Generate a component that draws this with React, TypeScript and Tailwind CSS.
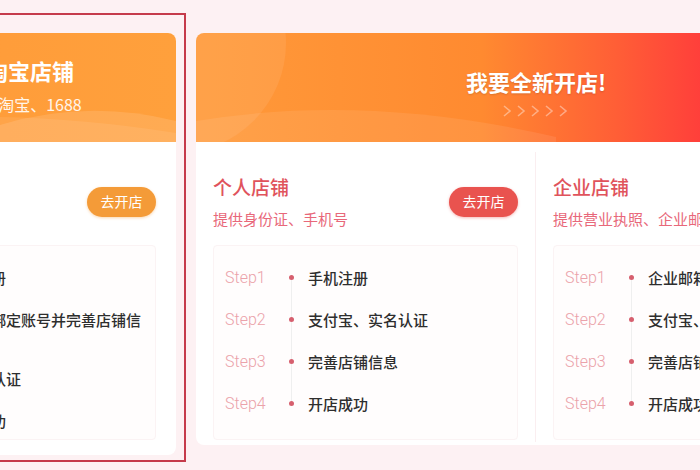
import React from 'react';

interface ShopColumnProps {
  title: string;
  sub: string;
  steps: string[];
  button: 'red' | 'orange';
}

const personal: ShopColumnProps = {
  title: '个人店铺',
  sub: '提供身份证、手机号',
  steps: ['手机注册', '支付宝、实名认证', '完善店铺信息', '开店成功'],
  button: 'red',
};

const company: ShopColumnProps = {
  title: '企业店铺',
  sub: '提供营业执照、企业邮箱',
  steps: ['企业邮箱注册', '支付宝、企业认证', '完善店铺信息', '开店成功'],
  button: 'red',
};

// left card is mostly cut off by the screenshot
const existing: ShopColumnProps = {
  title: '淘宝店铺',
  sub: '提供淘宝账号',
  steps: ['账号注册', '支付宝绑定账号并完善店铺信息', '支付宝认证', '开店成功'],
  button: 'orange',
};

function Chevrons() {
  return (
    <svg width="72" height="14" viewBox="0 0 72 14" fill="none">
      {[0, 1, 2, 3, 4].map((i) => (
        <path
          key={i}
          d={`M${4 + i * 14} 2 L${10 + i * 14} 7 L${4 + i * 14} 12`}
          stroke="white"
          strokeOpacity={0.4}
          strokeWidth="1.6"
        />
      ))}
    </svg>
  );
}

function ShopColumn({ title, sub, steps, button }: ShopColumnProps) {
  return (
    <div className="w-[305px] shrink-0 flex flex-col">
      <div className="flex items-center justify-between pt-[32px]">
        <div className="flex flex-col">
          <div className="text-[19px] leading-[25px] font-medium text-[#e0535c]">{title}</div>
          <div className="mt-[10px] text-[15px] leading-[20px] text-[#e8687a]">{sub}</div>
        </div>
        {button === 'red' ? (
          <button className="w-[69px] h-[30px] rounded-full bg-[#e9534f] text-white text-[14px] shadow-[0_1px_3px_rgba(233,83,79,0.4)]">
            去开店
          </button>
        ) : (
          <button className="w-[69px] h-[30px] rounded-full bg-[#f49b38] text-white text-[14px] shadow-[0_1px_3px_rgba(244,155,56,0.4)]">
            去开店
          </button>
        )}
      </div>

      <div className="mt-[16px] h-[195px] rounded border border-[#fbf3f4] bg-[#fffdfd] pl-[11px] pr-[7px] pt-[23px]">
        <div className="relative flex flex-col gap-[25px]">
          <div className="absolute left-[66px] top-[8px] bottom-[8px] w-px bg-[#efefef]" />
          {steps.map((s, i) => (
            <div key={i} className="flex items-start">
              <div className="w-[58px] shrink-0 font-['Roboto',sans-serif] font-light text-[16px] leading-[17px] text-[#eba2aa]">
                Step{i + 1}
              </div>
              <div className="w-[16px] h-[17px] shrink-0 flex items-center justify-center relative">
                <div className="w-[5px] h-[5px] rounded-full bg-[#d65f6e]" />
              </div>
              <div className="ml-[9px] w-[205px] text-[15px] leading-[17px] font-medium text-[#2e2e2e]">{s}</div>
            </div>
          ))}
        </div>
      </div>
    </div>
  );
}

export default function App() {
  return (
    <div className="w-[700px] h-[470px] bg-[#fdf1f3] overflow-hidden flex items-start font-['Noto_Sans_CJK_SC',sans-serif]">
      {/* selected card, partly off-screen */}
      <div className="ml-[-176px] mt-[13px] w-[362px] h-[449px] shrink-0 border-2 border-[#c53b4b] pt-[18px] pr-[8px] pl-[8px] pb-[5px] flex">
        <div className="flex-1 bg-white rounded-lg flex flex-col px-[17px] pb-[15px] relative">
          <div className="relative -mx-[17px] h-[109px] rounded-t-lg bg-[linear-gradient(90deg,#ff9a38,#ffa03c)] overflow-hidden pl-[6px] flex flex-col items-center pt-[23px] text-white">
            <svg className="absolute inset-0" width="342" height="109" viewBox="0 0 342 109" preserveAspectRatio="none">
              <path d="M120 109 Q 230 60 342 88 L342 109 Z" fill="white" fillOpacity="0.12" />
              <path d="M0 96 Q 150 70 342 100 L342 109 L0 109 Z" fill="white" fillOpacity="0.08" />
            </svg>
            <div className="relative text-[22px] leading-[29px] font-bold whitespace-nowrap">已有淘宝店铺</div>
            <div className="relative mt-[8px] text-[16px] leading-[22px] text-white/90 whitespace-nowrap">支持天猫淘宝、1688</div>
          </div>
          <ShopColumn {...existing} />
        </div>
      </div>

      {/* new shop card */}
      <div className="ml-[10px] mt-[33px] w-[680px] h-[412px] shrink-0 bg-white rounded-lg flex flex-col">
        <div className="relative h-[109px] rounded-t-lg overflow-hidden bg-[linear-gradient(90deg,#ff9a3a_0%,#ff8a30_42%,#ff5e36_62%,#ff3d3b_75%,#ff2f3a_100%)] flex flex-col items-center pt-[33px]">
          <svg className="absolute inset-0" width="680" height="109" viewBox="0 0 680 109">
            <circle cx="-20" cy="10" r="110" fill="white" fillOpacity="0.08" />
            <path d="M0 88 Q 170 60 360 104 L360 109 L0 109 Z" fill="white" fillOpacity="0.08" />
          </svg>
          <div className="relative text-white text-[22px] leading-[30px] font-bold [text-shadow:0_1px_2px_rgba(0,0,0,0.15)]">
            我要全新开店!
          </div>
          <div className="relative mt-[8px]">
            <Chevrons />
          </div>
        </div>
        <div className="flex px-[17px]">
          <ShopColumn {...personal} />
          <div className="mx-[17px] w-px mt-[10px] h-[290px] bg-[#faeef0]" />
          <ShopColumn {...company} />
        </div>
      </div>
    </div>
  );
}
